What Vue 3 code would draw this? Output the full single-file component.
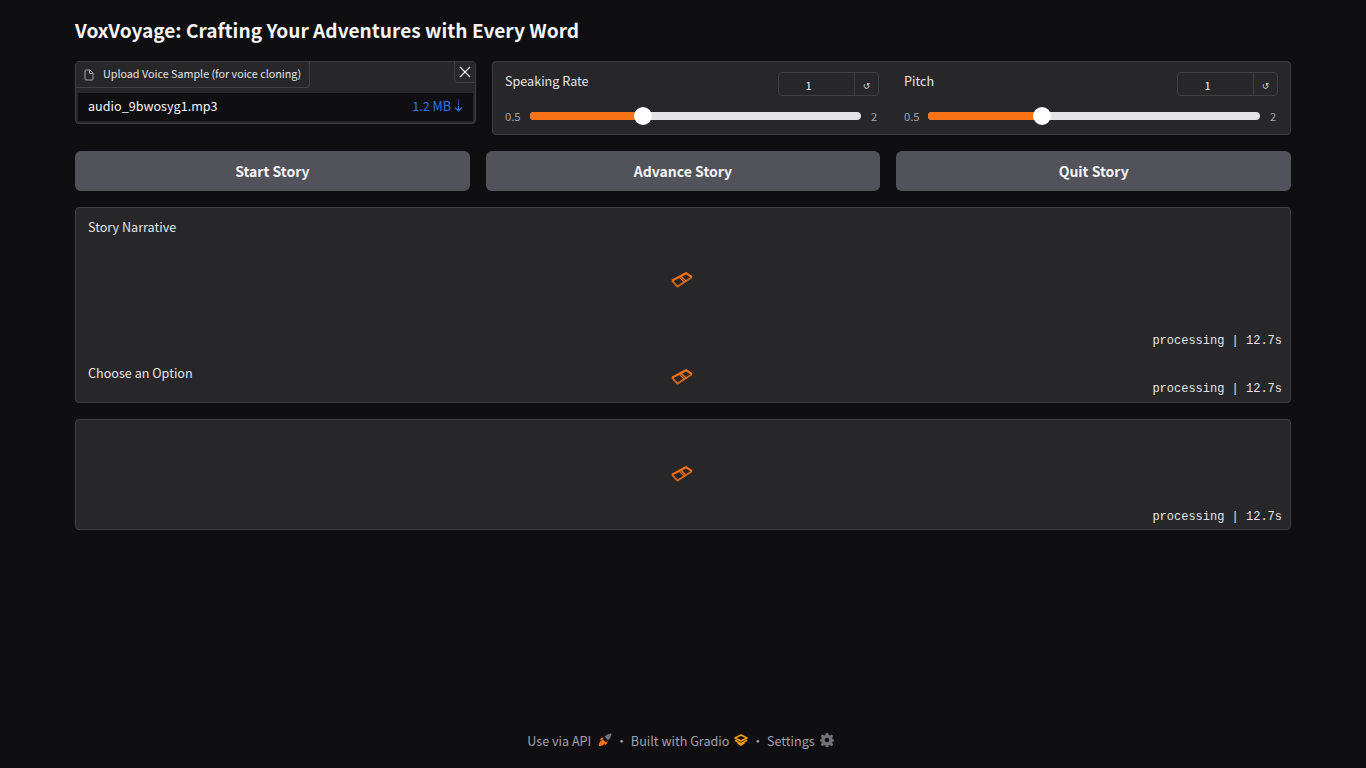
<script setup>
const sliders = [
  { label: 'Speaking Rate' },
  { label: 'Pitch' },
]
const buttons = ['Start Story', 'Advance Story', 'Quit Story']
</script>

<template>
  <div class="page">
    <main class="container">
      <h1 class="title">VoxVoyage: Crafting Your Adventures with Every Word</h1>

      <section class="top-row">
        <div class="upload">
          <div class="upload-head">
            <div class="upload-label">
              <svg class="file-icon" viewBox="0 0 24 24" fill="none" stroke="currentColor" stroke-width="2" stroke-linecap="round" stroke-linejoin="round">
                <path d="M13 2H6a2 2 0 0 0-2 2v16a2 2 0 0 0 2 2h12a2 2 0 0 0 2-2V9z" />
                <path d="M13 2v7h7" />
              </svg>
              <span class="upload-text">Upload Voice Sample (for voice cloning)</span>
            </div>
            <button class="close" aria-label="Clear">
              <svg viewBox="0 0 12 12" fill="none" stroke="currentColor" stroke-width="1.1">
                <path d="M1 1l10 10M11 1L1 11" />
              </svg>
            </button>
          </div>
          <div class="file-row">
            <span class="file-name">audio_9bwosyg1.mp3</span>
            <span class="file-size">1.2 MB
              <svg class="arrow" viewBox="0 0 9 12" fill="none" stroke="currentColor" stroke-width="1.1">
                <path d="M4.5 0.5V2M4.5 3.2V4.7M4.5 5.9V10.8" />
                <path d="M1 7.4L4.5 11L8 7.4" />
              </svg>
            </span>
          </div>
        </div>

        <div class="sliders">
          <div v-for="s in sliders" :key="s.label" class="slider">
            <div class="slider-head">
              <span class="slider-label">{{ s.label }}</span>
              <div class="num">
                <span class="num-value">1</span>
                <span class="num-reset">↺</span>
              </div>
            </div>
            <div class="track-row">
              <span class="bound bound-min">0.5</span>
              <div class="track">
                <div class="fill"></div>
                <div class="thumb"></div>
              </div>
              <span class="bound bound-max">2</span>
            </div>
          </div>
        </div>
      </section>

      <section class="btn-row">
        <button v-for="b in buttons" :key="b" class="btn">{{ b }}</button>
      </section>

      <section class="panel">
        <div class="block block-narrative">
          <span class="block-label">Story Narrative</span>
          <div class="loader-layer">
            <svg class="loader" viewBox="0 0 22 16" fill="none" stroke="#f97316" stroke-linejoin="round">
              <path d="M1 8.6L15 1.2L21 5.2" stroke-width="2.2" />
              <path d="M21 5.2L6.4 14.6L1 8.6" stroke-width="1.9" stroke-opacity="0.8" />
              <path d="M8 4.9L13.6 10.4M9.8 4L15.2 9.3" stroke-width="1.3" />
            </svg>
          </div>
          <span class="status">processing | 12.7s</span>
        </div>
        <div class="block block-option">
          <span class="block-label">Choose an Option</span>
          <div class="loader-layer">
            <svg class="loader" viewBox="0 0 22 16" fill="none" stroke="#f97316" stroke-linejoin="round">
              <path d="M1 8.6L15 1.2L21 5.2" stroke-width="2.2" />
              <path d="M21 5.2L6.4 14.6L1 8.6" stroke-width="1.9" stroke-opacity="0.8" />
              <path d="M8 4.9L13.6 10.4M9.8 4L15.2 9.3" stroke-width="1.3" />
            </svg>
          </div>
          <span class="status">processing | 12.7s</span>
        </div>
      </section>

      <section class="panel panel-audio">
        <div class="block block-audio">
          <div class="loader-layer">
            <svg class="loader" viewBox="0 0 22 16" fill="none" stroke="#f97316" stroke-linejoin="round">
              <path d="M1 8.6L15 1.2L21 5.2" stroke-width="2.2" />
              <path d="M21 5.2L6.4 14.6L1 8.6" stroke-width="1.9" stroke-opacity="0.8" />
              <path d="M8 4.9L13.6 10.4M9.8 4L15.2 9.3" stroke-width="1.3" />
            </svg>
          </div>
          <span class="status">processing | 12.7s</span>
        </div>
      </section>
    </main>

    <footer class="footer">
      <span class="foot-item">Use via API
        <svg class="foot-icon rocket" viewBox="0 0 14 14">
          <path d="M13.4 0.6C11 0.6 8.4 1.8 6.6 3.8L10.2 7.4C12.2 5.6 13.4 3 13.4 0.6z" fill="#71717a" />
          <path d="M6 4.4L3.2 5L1.6 6.8L4.4 7zM9.6 8L9 10.8L7.2 12.4L7 9.6z" fill="#f97316" />
          <path d="M5 6.4L7.6 9C7.2 11 5 13 0.8 13.2C1 9 3 6.8 5 6.4z" fill="#f97316" />
        </svg>
      </span>
      <span class="dot">·</span>
      <span class="foot-item">Built with Gradio
        <svg class="foot-icon logo" viewBox="0 0 14 12" fill="none" stroke="#f59e0b" stroke-width="1.6" stroke-linejoin="round">
          <path d="M7 1L13 4L7 7L1 4z" />
          <path d="M1 6.2L7 9.6L13 6.2" />
          <path d="M3.5 8.6L7 11L10.5 8.6" />
        </svg>
      </span>
      <span class="dot">·</span>
      <span class="foot-item">Settings
        <svg class="foot-icon gear" viewBox="0 0 24 24">
          <path fill="#71717a" fill-rule="evenodd" d="M10 0h4l.8 3.4 2 .9L20 2.4 22.6 5l-1.9 3.2.9 2L24 11v3l-2.4.8-.9 2 1.9 3.2L20 22.6l-3.2-1.9-2 .9L14 24h-4l-.8-2.4-2-.9L4 22.6 1.4 20l1.9-3.2-.9-2L0 14v-3l2.4-.8.9-2L1.4 5 4 2.4l3.2 1.9 2-.9zM12 8a4 4 0 1 0 0 8 4 4 0 0 0 0-8z" />
        </svg>
      </span>
    </footer>
  </div>
</template>

<style>
html, body { margin: 0; background: #0f0f11; }
</style>

<style scoped>
.page {
  height: 768px;
  display: flex;
  flex-direction: column;
  background: #0f0f11;
  color: #f4f4f5;
  font-family: "Noto Sans CJK SC", "Noto Sans", sans-serif;
  overflow: hidden;
}
.container {
  width: 1216px;
  margin: 0 auto;
  flex: 1;
  box-sizing: border-box;
  padding-top: 15px;
  display: flex;
  flex-direction: column;
}
.title {
  margin: 0 0 16px;
  font-size: 19.1px;
  line-height: 30px;
  font-weight: 600;
  color: #f4f4f5;
}
.top-row {
  display: grid;
  grid-template-columns: 401px 799px;
  gap: 16px;
  align-items: start;
}
.upload {
  height: 63px;
  box-sizing: border-box;
  background: #27272a;
  border: 1px solid #3f3f46;
  border-radius: 4px;
  display: flex;
  flex-direction: column;
}
.upload-head {
  height: 31px;
  display: flex;
  justify-content: space-between;
  align-items: flex-start;
}
.upload-label {
  height: 25px;
  width: 233px;
  box-sizing: content-box;
  background: #27272a;
  border-right: 1px solid #3f3f46;
  border-bottom: 1px solid #3f3f46;
  border-bottom-right-radius: 4px;
  display: flex;
  align-items: center;
  font-size: 10.75px;
  white-space: nowrap;
  color: #e4e4e7;
}
.upload-text { padding-bottom: 2px; }
.file-icon {
  width: 12px;
  height: 12px;
  margin: 0 8px 0 7px;
  color: #a1a1aa;
}
.close {
  width: 21px;
  height: 21px;
  padding: 0;
  background: #27272a;
  border: none;
  border-left: 1px solid #3f3f46;
  border-bottom: 1px solid #3f3f46;
  border-bottom-left-radius: 4px;
  color: #f4f4f5;
  display: flex;
  align-items: center;
  justify-content: center;
}
.close svg { width: 12px; height: 12px; }
.file-row {
  flex: 1;
  margin: 0 2px 2px;
  background: #0f0f11;
  display: flex;
  align-items: center;
  justify-content: space-between;
  padding: 0 10px 3px 10px;
  box-sizing: border-box;
  font-size: 12.6px;
}
.file-name { color: #f4f4f5; }
.file-size {
  color: #3474ea;
  display: flex;
  align-items: center;
  gap: 3px;
}
.arrow { width: 9px; height: 12px; }
.sliders {
  height: 74px;
  box-sizing: border-box;
  background: #27272a;
  border: 1px solid #3f3f46;
  border-radius: 4px;
  padding: 0 12px;
  display: grid;
  grid-template-columns: 374px 374px;
  column-gap: 25px;
}
.slider {
  display: flex;
  flex-direction: column;
}
.slider-head {
  height: 41px;
  display: flex;
  justify-content: space-between;
  padding-top: 10px;
  box-sizing: border-box;
}
.slider-label {
  font-size: 12.6px;
  line-height: 18px;
  color: #e4e4e7;
}
.num {
  width: 101px;
  height: 24px;
  box-sizing: border-box;
  border: 1px solid #3f3f46;
  border-radius: 4px;
  display: flex;
  font-size: 11.2px;
  color: #f4f4f5;
}
.num-value {
  flex: 1;
  text-align: center;
  line-height: 24px;
  padding-right: 16px;
  border-right: 1px solid #3f3f46;
}
.num-reset {
  width: 23px;
  text-align: center;
  line-height: 26px;
  font-family: "DejaVu Sans", sans-serif;
  font-size: 9px;
  color: #d4d4d8;
}
.track-row {
  display: flex;
  align-items: center;
  height: 26px;
  font-size: 11.2px;
  color: #a1a1aa;
}
.bound { line-height: 26px; }
.bound-min { width: 25px; }
.bound-max { flex: 1; padding-left: 10px; }
.slider:nth-child(2) .bound-min { width: 24px; }
.slider:nth-child(2) .track { width: 332px; }
.slider:nth-child(2) .fill { width: 114px; }
.slider:nth-child(2) .thumb { left: 105px; }
.track {
  position: relative;
  width: 331px;
  height: 8px;
  border-radius: 4px;
  background: #e4e4e7;
}
.fill {
  width: 113px;
  height: 8px;
  background: #f97316;
  border-radius: 4px 0 0 4px;
}
.thumb {
  position: absolute;
  left: 104px;
  top: -5px;
  width: 18px;
  height: 18px;
  border-radius: 50%;
  background: #fff;
}
.btn-row {
  display: grid;
  grid-template-columns: repeat(3, 1fr);
  gap: 16px;
  margin-top: 16px;
}
.btn {
  height: 40px;
  padding: 0;
  border: none;
  border-radius: 6px;
  background: #52525b;
  color: #f4f4f5;
  font-family: inherit;
  font-size: 14px;
  font-weight: 600;
}
.panel {
  margin-top: 16px;
  background: #27272a;
  border: 1px solid #3f3f46;
  border-radius: 4px;
  display: flex;
  flex-direction: column;
}
.block {
  position: relative;
  box-sizing: border-box;
}
.block-narrative { height: 144px; }
.block-option { height: 50px; }
.block-audio { height: 109px; }
.block-label {
  display: block;
  padding: 9px 12px 0;
  font-size: 12.6px;
  line-height: 20px;
  color: #e4e4e7;
}
.block-option .block-label { padding-top: 11px; }
.loader-layer {
  position: absolute;
  inset: 0;
  display: flex;
  align-items: center;
  justify-content: center;
  transform: translateX(-1px);
}
.block-audio .loader-layer { transform: translate(-1px, -1px); }
.loader { width: 22px; height: 16px; }
.status {
  position: absolute;
  right: 8px;
  bottom: 3px;
  font-family: "Liberation Mono", monospace;
  font-size: 12px;
  line-height: 16px;
  color: #e4e4e7;
}
.block-option .status { bottom: 5px; }
.block-audio .status { bottom: 4px; }
.footer {
  height: 54px;
  flex: none;
  box-sizing: border-box;
  padding: 0 5px 2px 0;
  display: flex;
  align-items: center;
  justify-content: center;
  font-size: 12.6px;
  color: #a1a1aa;
}
.foot-item {
  display: flex;
  align-items: center;
  gap: 5px;
}
.foot-icon { width: 14px; height: 12px; }
.rocket { width: 14px; height: 14px; margin-left: 2px; }
.logo { width: 14px; height: 12px; }
.gear { width: 14px; height: 14px; }
.dot { margin: 0 3px; }
</style>
